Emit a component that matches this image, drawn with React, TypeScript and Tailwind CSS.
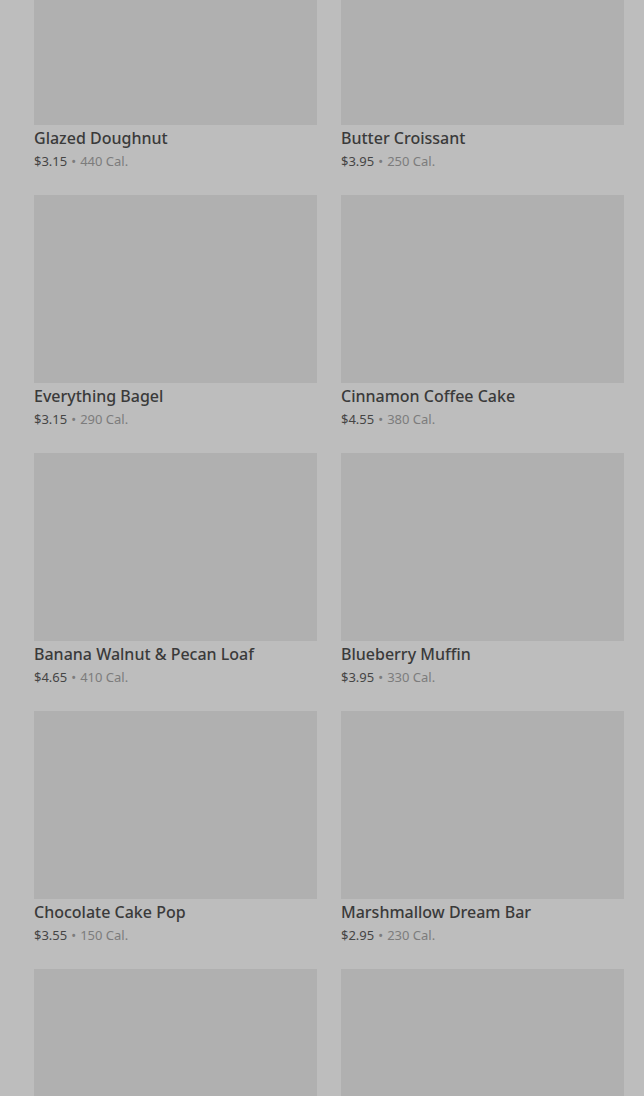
import React from "react";

interface Product {
  name: string;
  price: string;
  calories: number;
}

const products: Product[] = [
  { name: "Glazed Doughnut", price: "$3.15", calories: 440 },
  { name: "Butter Croissant", price: "$3.95", calories: 250 },
  { name: "Everything Bagel", price: "$3.15", calories: 290 },
  { name: "Cinnamon Coffee Cake", price: "$4.55", calories: 380 },
  { name: "Banana Walnut & Pecan Loaf", price: "$4.65", calories: 410 },
  { name: "Blueberry Muffin", price: "$3.95", calories: 330 },
  { name: "Chocolate Cake Pop", price: "$3.55", calories: 150 },
  { name: "Marshmallow Dream Bar", price: "$2.95", calories: 230 },
  { name: "", price: "", calories: 0 },
  { name: "", price: "", calories: 0 },
];

function ProductCard({ product }: { product: Product }) {
  return (
    <div className="flex flex-col">
      <div className="h-[188px] w-full bg-[#b0b0b0]" />
      {product.name && (
        <div className="pt-[2px]">
          <h3 className="text-[16px] leading-[22px] font-medium text-[#3a3a3a]">
            {product.name}
          </h3>
          <p className="mt-[3px] text-[13px] leading-[18px] text-[#7c7c7c]">
            <span className="text-[#454545]">{product.price}</span>
            <span className="mx-[4px]">•</span>
            {product.calories} Cal.
          </p>
        </div>
      )}
    </div>
  );
}

export default function App() {
  return (
    <div
      className="h-[1096px] w-full overflow-hidden bg-[#bdbdbd]"
      style={{ fontFamily: "'Noto Sans', Roboto, sans-serif" }}
    >
      <div className="-mt-[63px] grid grid-cols-2 gap-x-6 gap-y-[25px] pr-5 pl-[34px]">
        {products.map((p, i) => (
          <ProductCard key={i} product={p} />
        ))}
      </div>
    </div>
  );
}
